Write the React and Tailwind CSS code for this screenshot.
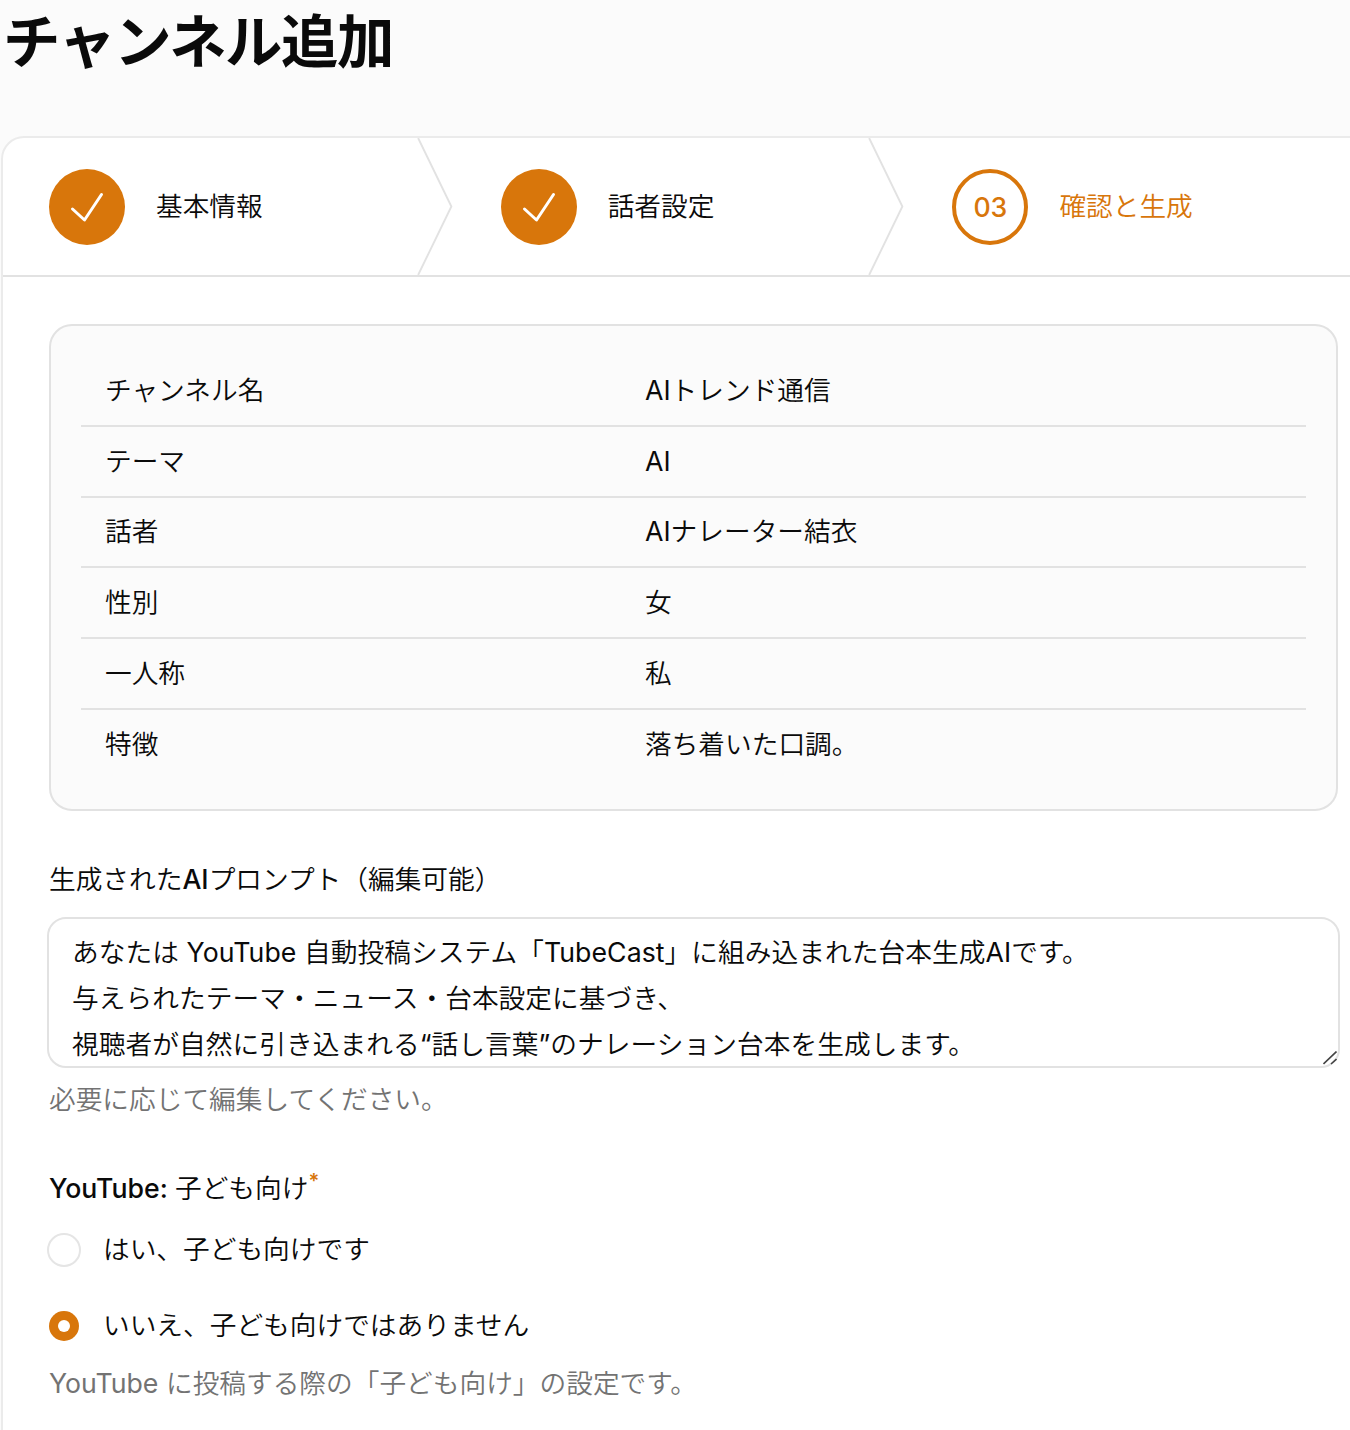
import clsx from 'clsx';

const steps = [
  { label: '基本情報', done: true },
  { label: '話者設定', done: true },
  { label: '確認と生成', number: '03' },
];

const summary = [
  ['チャンネル名', 'AIトレンド通信'],
  ['テーマ', 'AI'],
  ['話者', 'AIナレーター結衣'],
  ['性別', '女'],
  ['一人称', '私'],
  ['特徴', '落ち着いた口調。'],
];

const prompt = `あなたは YouTube 自動投稿システム「TubeCast」に組み込まれた台本生成AIです。
与えられたテーマ・ニュース・台本設定に基づき、
視聴者が自然に引き込まれる“話し言葉”のナレーション台本を生成します。`;

function CheckMark() {
  return (
    <svg className="size-[76px]" viewBox="0 0 76 76" fill="none" stroke="currentColor" strokeWidth="3" strokeLinecap="round" strokeLinejoin="round">
      <path d="M23.5 40 L35.5 51 L52.5 25.5" />
    </svg>
  );
}

function Step({ step, last }) {
  return (
    <li className={clsx('relative flex h-full shrink-0 items-center pl-[46px]', last ? 'w-[452px]' : 'w-[451.7px]')}>
      {step.done ? (
        <span className="flex size-[76px] items-center justify-center rounded-full bg-[#d8760b] text-white">
          <CheckMark />
        </span>
      ) : (
        <span className="flex size-[76px] items-center justify-center rounded-full border-4 border-[#d8760b] text-[26.7px] font-medium text-[#d8760b]">
          {step.number}
        </span>
      )}
      <span className={clsx('-mt-0.5 ml-[31px]', step.done ? 'text-[#0a0a0a]' : 'text-[#d8760b]')}>{step.label}</span>
      {last ? null : (
        <svg className="absolute top-0 right-0.5 h-full w-[36px]" viewBox="0 0 36 138" fill="none" stroke="#e2e2e2" strokeWidth="1.9">
          <path d="M1 0 L34.5 69 L1 138" />
        </svg>
      )}
    </li>
  );
}

function Radio({ checked, children }) {
  return (
    <label className="flex h-[38px] items-center">
      {checked ? (
        <span className="mx-0.5 flex size-[30px] items-center justify-center rounded-full bg-[#d8760b]">
          <span className="size-3 rounded-full bg-white" />
        </span>
      ) : (
        <span className="size-[34px] rounded-full border-2 border-[#e5e5e5]" />
      )}
      <span className="-mt-0.5 ml-[22px]">{children}</span>
    </label>
  );
}

export default function App() {
  return (
    <div className="h-[1430px] w-full overflow-hidden bg-[#fbfbfb] pl-px font-['Inter','Noto_Sans_CJK_JP_DemiLight','Noto_Sans_CJK_JP_Light','Noto_Sans_CJK_JP',sans-serif] text-[26.7px] leading-[38px] text-[#0a0a0a]">
      <h1 className="h-[136px] pt-1.5 pl-0.5 font-['Inter','Noto_Sans_CJK_JP',sans-serif] text-[57.4px] leading-[72px] font-bold tracking-[-0.025em] whitespace-nowrap">
        チャンネル追加
      </h1>

      <div className="h-[1400px] w-[1400px] rounded-tl-[23px] border-2 border-[#ebebeb] bg-white">
        <ol className="flex h-[139px] items-center border-b-2 border-[#e2e2e2] whitespace-nowrap">
          {steps.map((step, i) => (
            <Step key={step.label} step={step} last={i === steps.length - 1} />
          ))}
        </ol>

        <div className="ml-[44px] w-[1293px] pt-[47px]">
          <div className="mx-0.5 h-[487px] rounded-[23px] border-2 border-[#e2e2e2] bg-[#fbfbfb] px-[30px] pt-[30px]">
            {summary.map(([name, value], i) => (
              <div
                key={name}
                className={clsx(
                  'flex h-[70.8px] items-center px-6',
                  i < summary.length - 1 ? 'border-b-2 border-[#e2e2e2] pb-px' : 'pb-[3px]',
                )}
              >
                <span className="w-[540px]">{name}</span>
                <span>{value}</span>
              </div>
            ))}
          </div>

          <div className="mt-[49px] ml-0.5 font-medium">生成されたAIプロンプト（編集可能）</div>
          <div className="relative mt-[19px] h-[151px]">
            <textarea
              readOnly
              value={prompt}
              className="block h-full w-full resize-none overflow-hidden rounded-[19px] border-2 border-[#e2e2e2] bg-white px-[23px] pt-[10px] leading-[46px] tracking-[0.06px] outline-none"
            />
            <svg className="absolute right-[3px] bottom-[3px] size-[14px]" viewBox="0 0 14 14" stroke="#444" strokeWidth="1.6">
              <path d="M0.5 13 L13.5 0.5 M8 13 L13.5 8" />
            </svg>
          </div>
          <p className="mt-3 ml-0.5 text-[#737373]">必要に応じて編集してください。</p>

          <div className="mt-[51px] ml-0.5 font-medium">
            YouTube: 子ども向け<sup className="top-[-0.5em] text-[20px] font-semibold text-[#d8760b]">*</sup>
          </div>
          <div className="mt-6 space-y-[38px]">
            <Radio>はい、子ども向けです</Radio>
            <Radio checked>いいえ、子ども向けではありません</Radio>
          </div>
          <p className="mt-[19px] ml-0.5 text-[#737373]">YouTube に投稿する際の「子ども向け」の設定です。</p>
        </div>
      </div>
    </div>
  );
}
